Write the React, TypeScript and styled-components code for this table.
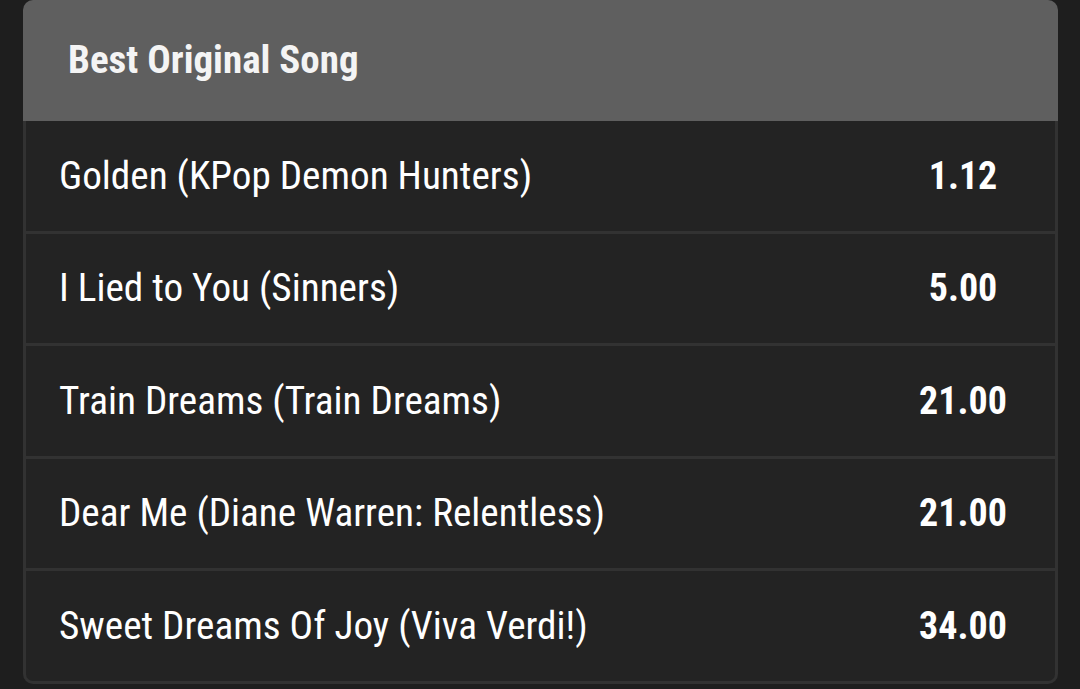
import React from "react";
import styled, {createGlobalStyle} from "styled-components";

type Runner = {
    name: string;
    odds: string;
};

const runners: Runner[] = [
    {name: "Golden (KPop Demon Hunters)", odds: "1.12"},
    {name: "I Lied to You (Sinners)", odds: "5.00"},
    {name: "Train Dreams (Train Dreams)", odds: "21.00"},
    {name: "Dear Me (Diane Warren: Relentless)", odds: "21.00"},
    {name: "Sweet Dreams Of Joy (Viva Verdi!)", odds: "34.00"},
];

const GlobalStyle = createGlobalStyle`
  html, body {
    margin: 0;
    padding: 0;
    background: #1e1e1e;
  }
  body {
    font-family: "Roboto Condensed", Roboto, "Liberation Sans", sans-serif;
    color: #fff;
  }
`;

const Page = styled.div`
  height: 689px;
  padding: 0 22px 0 23px;
  box-sizing: border-box;
`;

const Market = styled.section`
  display: flex;
  flex-direction: column;
`;

const MarketHeader = styled.header`
  height: 121px;
  display: flex;
  align-items: center;
  padding-left: 45px;
  background: #5f5f5f;
  border-radius: 10px 10px 0 0;
`;

const Title = styled.h2`
  margin: 0;
  font-size: 39px;
  font-weight: 700;
  color: #f4f4f4;
  transform: translateY(-1px);
`;

const Selections = styled.div`
  border: 3px solid #323232;
  border-top: none;
  border-radius: 0 0 10px 10px;
  background: #232323;
  overflow: hidden;
`;

const Row = styled.div`
  height: 109.5px;
  display: flex;
  align-items: center;
  border-bottom: 3px solid #323232;

  &:last-child {
    border-bottom: none;
  }
`;

const Name = styled.span`
  flex: 1;
  padding-left: 33px;
  font-size: 39.2px;
  font-weight: 400;
`;

const Odds = styled.span`
  width: 184px;
  text-align: center;
  font-size: 38px;
  font-weight: 700;
`;

export default function App() {
    return (
        <Page>
            <GlobalStyle/>
            <Market>
                <MarketHeader>
                    <Title>Best Original Song</Title>
                </MarketHeader>
                <Selections>
                    {runners.map((r) => (
                        <Row key={r.name}>
                            <Name>{r.name}</Name>
                            <Odds>{r.odds}</Odds>
                        </Row>
                    ))}
                </Selections>
            </Market>
        </Page>
    );
}
